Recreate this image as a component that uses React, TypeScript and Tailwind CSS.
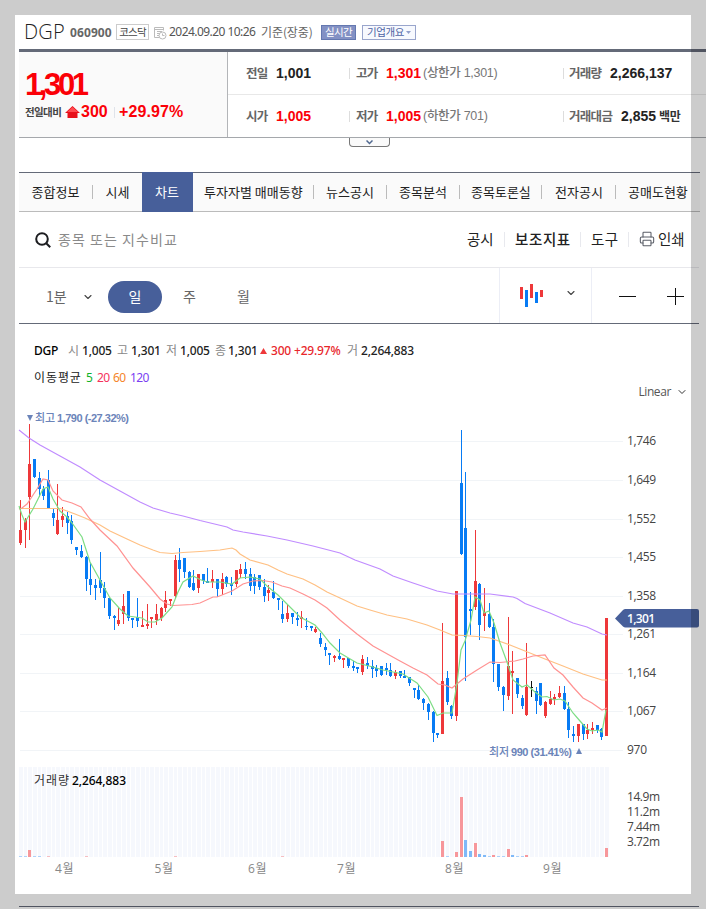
import { ChevronDown, Printer } from 'lucide-react';
import clsx from 'clsx';

type Tone = 'up' | 'down' | 'flat';
type Candle = [tone: Tone, high: number, top: number, bottom: number, low: number];

const u = 'up' as const;
const d = 'down' as const;

// Wick and body edges per trading day, measured down from the top of the plot.
const CANDLES: Candle[] = [
	[u, 100, 130, 143, 145], [u, 118, 120, 130, 148], [u, 24, 64, 97, 140], [d, 59, 59, 77, 78],
	[d, 72, 78, 89, 97], [d, 86, 89, 96, 100], [d, 70, 80, 108, 108], [d, 109, 113, 118, 126],
	[u, 84, 120, 134, 135], [u, 107, 116, 120, 127], [d, 112, 116, 123, 134], [d, 115, 121, 140, 144],
	[d, 147, 147, 150, 155], [d, 145, 151, 157, 158], [d, 156, 157, 179, 191], [d, 163, 179, 185, 195],
	[d, 179, 185, 188, 200], [d, 152, 180, 188, 193], [d, 182, 188, 198, 208], [d, 198, 198, 216, 219],
	[d, 215, 216, 218, 230], [u, 208, 220, 224, 226], [u, 194, 206, 214, 224], [d, 191, 191, 218, 221],
	[d, 218, 218, 220, 228], [d, 198, 217, 221, 227], [u, 211, 225, 227, 227], [u, 204, 224, 226, 229],
	[u, 217, 217, 219, 228], [u, 204, 214, 220, 225], [u, 207, 208, 218, 221], [u, 191, 200, 208, 212],
	[u, 199, 199, 201, 206], [u, 155, 160, 196, 199], [d, 148, 160, 169, 182], [d, 158, 158, 172, 178],
	[d, 171, 172, 187, 188], [d, 170, 183, 190, 191], [u, 174, 174, 188, 193], [d, 174, 174, 181, 184],
	[d, 168, 181, 183, 183], [u, 170, 179, 182, 188], [d, 179, 179, 189, 197], [u, 173, 179, 189, 195],
	[d, 176, 177, 184, 187], [d, 177, 184, 186, 195], [u, 170, 170, 184, 187], [u, 164, 169, 174, 178],
	[d, 162, 169, 174, 179], [d, 168, 174, 186, 191], [d, 174, 177, 186, 194], [d, 175, 175, 187, 190],
	[d, 179, 187, 196, 202], [u, 185, 190, 193, 201], [d, 181, 192, 198, 199], [d, 198, 198, 200, 210],
	[d, 201, 214, 219, 223], [u, 204, 213, 219, 222], [d, 213, 213, 217, 224], [d, 212, 218, 220, 226],
	[u, 211, 217, 219, 228], [d, 218, 226, 227, 230], [d, 226, 226, 228, 231], [u, 227, 229, 232, 233],
	[d, 233, 238, 244, 247], [d, 243, 247, 250, 256], [d, 253, 253, 255, 265], [u, 255, 256, 258, 262],
	[d, 239, 256, 259, 260], [u, 258, 258, 260, 268], [d, 258, 258, 266, 268], [d, 261, 266, 268, 271],
	[d, 267, 267, 269, 273], [u, 255, 259, 272, 275], [d, 257, 263, 266, 269], [d, 260, 266, 269, 278],
	[d, 265, 268, 271, 277], [d, 266, 266, 275, 276], [d, 263, 268, 270, 275], [d, 263, 270, 276, 277],
	[u, 270, 272, 276, 279], [d, 271, 271, 276, 278], [d, 270, 276, 278, 278], [d, 277, 277, 283, 286],
	[d, 288, 288, 290, 298], [d, 285, 290, 299, 300], [d, 298, 299, 303, 310], [d, 303, 304, 312, 320],
	[d, 311, 312, 333, 342], [d, 333, 333, 335, 338], [u, 223, 281, 334, 334], [d, 271, 278, 302, 305],
	[d, 305, 306, 316, 319], [u, 191, 191, 316, 321], [d, 30, 83, 154, 155], [d, 72, 128, 237, 281],
	[d, 192, 209, 211, 235], [u, 130, 181, 207, 210], [d, 183, 184, 225, 240], [u, 188, 212, 216, 231],
	[d, 203, 214, 227, 228], [d, 219, 227, 264, 282], [d, 264, 264, 287, 291], [d, 286, 287, 295, 311],
	[u, 217, 266, 296, 300], [u, 251, 271, 273, 314], [d, 278, 278, 294, 298], [d, 295, 298, 306, 309],
	[u, 243, 287, 315, 316], ['flat', 281, 287, 288, 297], [d, 287, 291, 301, 314], [d, 283, 283, 305, 306],
	[u, 301, 302, 316, 318], [u, 291, 299, 304, 305], [u, 294, 297, 299, 305], [u, 286, 293, 297, 298],
	[d, 286, 293, 309, 310], [d, 302, 309, 330, 338], [d, 326, 334, 336, 342], [u, 324, 324, 336, 342],
	[d, 324, 324, 334, 340], [u, 324, 330, 334, 339], [u, 322, 328, 330, 334], [d, 325, 325, 330, 333],
	[d, 328, 329, 337, 340], [u, 218, 218, 336, 336],
];

const VOLUMES: Record<number, number> = {
	0: 1, 1: 1, 2: 7, 3: 1, 4: 1, 6: 1, 14: 1, 33: 1, 56: 1, 90: 16, 91: 1, 93: 5, 94: 60, 95: 17, 96: 6,
	97: 14, 98: 3, 99: 2, 100: 1, 101: 2, 102: 1, 103: 1, 104: 8, 105: 2, 106: 1, 107: 1, 108: 2, 125: 9,
};

// Days whose volume colour differs from the candle colour.
const VOLUME_TONES: Record<number, Tone> = {
	0: d, 1: d, 6: u, 14: u, 56: u, 94: u, 97: u, 99: d, 101: u, 105: d,
};

const MOVING_AVERAGES = [
	{
		color: '#c08cff',
		points:
			'19,30 29,38 40,45 60,56 80,67 100,80 120,91 140,102 153,108 170,113 183,116 200,120.5 227,127 233,130 243,132 267,136 287,140 313,146 340,153 355,160 380,169 393,176 413,183 437,191 453,194 490,194 513,197 517,198.5 525,203.5 550,213 573,223 587,227 602,234 607,235',
	},
	{
		color: '#ffc083',
		points:
			'19,108.5 60,108.5 67,111 75,114 85,118 100,125 110,131 127,139 140,145 153,150 160,152.5 172,153.5 183,152.5 200,151.5 220,150 232,148 236,150 240,154 250,160 268,165 278,170 287,174 303,179 315,185 327,192 340,198 357,206 370,210 387,215 407,219 427,225 440,230 452,235 463,235.5 477,236.5 490,238 510,245 525,251 545,259 563,266 583,274 602,280 607,280',
	},
	{
		color: '#ff9292',
		points:
			'19,109 22,108 27,104 37,89 43,79 48,80 53,91 62,100 72,103 81,107 90,119 100,130 117,146 133,168 150,187 160,199 167,204 173,205.5 192,204.5 200,203 213,197 217,197 232,191 243,184 253,181 263,180.5 272,182 282,186 290,188 303,194 315,200 327,208 340,220 357,234 373,246 400,261 413,268 427,275 438,284 445,285 452,288 463,279 477,270 490,262 500,262.5 515,261 523,259 533,256 545,255 554,268 563,275 573,287 583,298 592,303 602,310 607,308',
	},
	{
		color: '#7ddd85',
		points:
			'19,106 22,115 25,122 33,109 38,99 43,89 48,87 53,99 60,111 67,117 72,123 82,137 90,162 100,180 110,198 120,209 128,216 142,218 148,222 155,222 162,218 172,207 178,192 183,182 193,176 200,179.5 207,182 220,182 232,184 240,178 250,177 260,179 267,186 278,195 287,204 300,217 315,225 322,233 330,243 340,253 357,263 373,267 383,270 403,274 417,283 428,297 437,315.5 443,313 452,313 457,283 461,250 465,241 471,220 475,197 480,200 484,213 489,211 494,223 500,243 507,262 513,280 522,287 527,285 535,292 542,297 547,296.5 554,300 560,299 565,301 573,313 580,321 587,329 592,331 598,330 602,332 606,310',
	},
];

const PRICE_TICKS = [
	['1,746', 41], ['1,649', 80], ['1,552', 119], ['1,455', 157], ['1,358', 196],
	['1,261', 234], ['1,164', 273], ['1,067', 311], ['970', 350],
] as const;

const VOLUME_TICKS = [['14.9m', 397], ['11.2m', 412], ['7.44m', 427], ['3.72m', 442]] as const;

const MONTHS = [['4월', 55], ['5월', 154.5], ['6월', 248], ['7월', 337], ['8월', 445], ['9월', 543]] as const;

const BODY_FILL: Record<Tone, string> = { up: '#ee383a', down: '#077bf4', flat: '#111111' };
const VOLUME_FILL: Record<Tone, string> = { up: '#f7979b', down: '#7fb9f8', flat: '#999999' };

const dayX = (i: number) => Math.floor(19.42 + i * 4.6885);

const TABS = [
	{ label: '종합정보', className: 'w-[74px] pl-[12.500px]' },
	{ label: '시세', className: 'w-[49px] pl-[12.500px] text-[#2f6094]' },
	{ label: '차트', className: 'w-[51px] pl-[13px] bg-[#475f9a] text-white', active: true },
	{ label: '투자자별 매매동향', className: 'w-[121px] pl-[11px]' },
	{ label: '뉴스공시', className: 'w-[73px] pl-[12px]' },
	{ label: '종목분석', className: 'w-[73px] pl-[12px]' },
	{ label: '종목토론실', className: 'w-[82px] pl-[11px]' },
	{ label: '전자공시', className: 'w-[74px] pl-[13px]' },
	{ label: '공매도현황', className: 'w-[84px] pl-[12px]' },
];

function StockHeader() {
	return (
		<header className="ml-[19px] flex h-[37px] items-center border-b-[3px] border-[#646a78] pl-[5px] leading-none">
			<h1 className="w-[46px] font-['Open_Sans'] text-[20px] font-light tracking-[0.2px] text-[#222]">DGP</h1>
			<b className="mt-[2px] w-[46px] font-['Noto_Sans'] text-[12px] tracking-[0.1px] text-[#666]">060900</b>
			<span className="flex h-4 w-[33px] items-center justify-center border border-[#ccc] text-[10.500px] tracking-[-0.8px] text-[#444]">
				코스닥
			</span>
			<svg className="ml-[5px] mt-[3px] size-[13px]" viewBox="0 0 13 13" fill="none" stroke="#bbb">
				<path d="M5 10.5H.5V.5h9v3M.5 2.5h9M3 4.5h5M3 6.5h3M3 8.500h2" />
				<circle cx="8.500" cy="8.500" r="3.500" fill="#fff" />
				<path d="M8.500 6.500v2h2" />
			</svg>
			<time className="ml-[2px] w-[92px] font-['Noto_Sans'] text-[12px] tracking-[-0.55px] text-[#555]">
				2024.09.20 10:26
			</time>
			<span className="w-[60px] text-[12px] tracking-[-0.1px] text-[#666]">기준(장중)</span>
			<span className="flex h-[15px] w-[35px] items-center justify-center border border-[#6478b0] bg-[#8391c4] text-[10.500px] tracking-[-0.6px] text-white">
				실시간
			</span>
			<span className="ml-[6px] flex h-[15px] w-[54px] items-center gap-[2px] border border-[#99a5cc] bg-[#f7f9fe] pl-[4px] text-[10.500px] tracking-[-0.4px] text-[#4e64a4]">
				기업개요
				<svg className="h-[3px] w-[5px]" viewBox="0 0 5 3">
					<path d="M0 0h5L2.500 3z" fill="#8f9ecb" />
				</svg>
			</span>
		</header>
	);
}

function QuoteCell({ label, value, note, red, className, labelClass }: {
	label: string;
	value: string;
	note?: string;
	red?: boolean;
	className: string;
	labelClass: string;
}) {
	return (
		<div className={clsx('flex items-center', className)}>
			<span className={clsx('text-[12.500px] font-bold tracking-[-0.7px] text-[#666]', labelClass)}>{label}</span>
			<b className={clsx("font-['Liberation_Sans'] text-[14px]", red ? 'text-[#fb0007]' : 'text-[#222]')}>{value}</b>
			{note && (
				<span className="ml-[2px] font-['Liberation_Sans','Noto_Sans_CJK_KR',sans-serif] text-[12.500px] font-medium tracking-[-0.3px] text-[#777]">
					{note}
				</span>
			)}
		</div>
	);
}

function QuoteSummary() {
	return (
		<section className="ml-[19px] flex h-[86px] border-b border-[#a5a8ac] leading-none">
			<div className="flex w-[209px] flex-col border-r border-[#b3b5b8] bg-[#fafafa] pl-[6px] pt-[17px] text-[#fb0007]">
				<strong className="h-[32px] font-['Liberation_Sans'] text-[31px] leading-[32px] tracking-[-3.4px]">1,301</strong>
				<div className="mt-[2px] flex h-[18px] items-center">
					<span className="w-[40px] text-[10.500px] font-bold tracking-[-0.6px] text-[#444]">전일대비</span>
					<svg className="h-[12px] w-[15px]" viewBox="0 0 15 12">
						<path d="M7.500 0L15 7h-2.500v5h-10V7H0z" fill="#e8101a" />
						<path d="M7.500 1L13 6H2z" fill="#ff4a50" />
					</svg>
					<b className="ml-[1px] w-[33px] font-['Liberation_Sans'] text-[16px]">300</b>
					<i className="mr-[4px] h-[11px] w-px bg-[#dfe3ea]" />
					<b className="font-['Liberation_Sans'] text-[16px] tracking-[0.1px]">+29.97%</b>
				</div>
			</div>
			<div className="flex flex-1 flex-col">
				<div className="flex h-[43px] items-center border-b border-[#e8e8e8] pl-[18px]">
					<QuoteCell className="w-[103px]" labelClass="w-[30px]" label="전일" value="1,001" />
					<i className="h-[11px] w-px bg-[#ddd]" />
					<QuoteCell className="w-[213px] pl-[6px]" labelClass="w-[30px]" label="고가" value="1,301" note="(상한가 1,301)" red />
					<i className="h-[11px] w-px bg-[#ddd]" />
					<QuoteCell className="pl-[5px]" labelClass="w-[41px]" label="거래량" value="2,266,137" />
				</div>
				<div className="flex h-[42px] items-center pl-[18px]">
					<QuoteCell className="w-[103px]" labelClass="w-[30px]" label="시가" value="1,005" red />
					<i className="h-[11px] w-px bg-[#ddd]" />
					<QuoteCell className="w-[213px] pl-[6px]" labelClass="w-[30px]" label="저가" value="1,005" note="(하한가 701)" red />
					<i className="h-[11px] w-px bg-[#ddd]" />
					<QuoteCell className="pl-[5px]" labelClass="w-[52px]" label="거래대금" value="2,855" />
					<b className="ml-[3px] text-[12px] tracking-[-0.3px] text-[#333]">백만</b>
				</div>
			</div>
		</section>
	);
}

function NavTabs() {
	return (
		<nav className="ml-[19px] flex h-[40px] w-[681px] border-y border-t-[#646a78] border-b-[#bbb] bg-[#fafafa]">
			{TABS.map((tab, i) => (
				<div
					key={tab.label}
					className={clsx(
						'flex shrink-0 items-center whitespace-nowrap text-[13px]',
						tab.active ? '-my-px' : 'text-[#222]',
						tab.className
					)}
				>
					<span className="flex-1">{tab.label}</span>
					{![1, 2, 8].includes(i) && <i className="h-[14px] w-px bg-[#bbb]" />}
				</div>
			))}
		</nav>
	);
}

function SearchBar() {
	return (
		<div className="ml-[19px] flex h-[56px] w-[680px] items-center border-b border-[#e8e8ec] pl-[16px] text-[14.500px] leading-[22px] text-[#222]">
			<svg className="size-4" viewBox="0 0 16 16" fill="none" stroke="#1c1d20" strokeWidth="2">
				<circle cx="7" cy="7" r="5.800" />
				<path d="M11.200 11.200L15.200 15.200" />
			</svg>
			<span className="mb-[2px] ml-[7px] w-[409px] text-[14px] tracking-[1.05px] text-[#8a8a8a]">종목 또는 지수비교</span>
			<span className="mb-[2px] w-[37px]">공시</span>
			<i className="h-[15px] w-px bg-[#e8e9ee]" />
			<span className="mb-[2px] ml-[10px] w-[65px] font-medium tracking-[0.6px]">보조지표</span>
			<i className="h-[15px] w-px bg-[#e8e9ee]" />
			<span className="mb-[2px] ml-[10px] w-[37px] tracking-[0.3px]">도구</span>
			<i className="h-[15px] w-px bg-[#e8e9ee]" />
			<Printer className="mb-[2px] ml-[10px] size-4 text-[#5b5f68]" strokeWidth={1.6} />
			<span className="mb-[2px] ml-[3px]">인쇄</span>
		</div>
	);
}

function PeriodBar() {
	return (
		<div className="ml-[19px] flex h-[56px] w-[680px] items-center border-b border-[#646a78] text-[14px] text-[#666]">
			<div className="flex items-center pt-[2px]">
				<span className="ml-[27px] w-[36px]">1분</span>
				<ChevronDown className="size-3 text-[#444]" strokeWidth={2.200} />
				<span className="ml-[14px] flex h-8 w-[54px] items-center justify-center rounded-full bg-[#475f9a] text-white">일</span>
				<span className="ml-[21px] w-[54px]">주</span>
				<span>월</span>
			</div>
			<div className="ml-auto flex h-full w-[93px] items-center border-x border-[#eceef6] pl-[20px]">
				<svg className="mb-[2px] h-6 w-6" viewBox="0 0 24 24">
					<path d="M0 4h3v12H0zM10 1h3v14h-3zM20 7h3v7h-3z" fill="#ee383a" />
					<path d="M5 7h3v17H5zM15 9h3v11h-3z" fill="#077bf4" />
				</svg>
				<ChevronDown className="mb-[5px] ml-[21px] size-3 text-[#444]" strokeWidth={2.200} />
			</div>
			<svg className="h-[18px] w-[107px]" viewBox="0 0 107 18" stroke="#111">
				<path d="M27 9.500H44M75 9.500H92M83.500 1V18" />
			</svg>
		</div>
	);
}

function Legend() {
	return (
		<div className="ml-[34px] flex flex-col whitespace-nowrap pt-[17px] font-['Noto_Sans','Noto_Sans_CJK_KR',sans-serif] text-[12px] leading-[20px] text-[#222]">
			<div className="flex h-[20px] font-medium tracking-[-0.2px]">
				<span className="w-[34px] text-black">DGP</span>
				<span className="w-[14px] font-normal text-[#888]">시</span>
				<span className="w-[35px]">1,005</span>
				<span className="w-[14px] font-normal text-[#888]">고</span>
				<span className="w-[35px]">1,301</span>
				<span className="w-[14px] font-normal text-[#888]">저</span>
				<span className="w-[35px]">1,005</span>
				<span className="w-[13px] font-normal text-[#888]">종</span>
				<span className="w-[32px]">1,301</span>
				<svg className="mt-[7px] h-[6px] w-[7px]" viewBox="0 0 7 6">
					<path d="M3.500 0L7 6H0z" fill="#ee383a" />
				</svg>
				<span className="ml-[4px] w-[23px] text-[#e8262b]">300</span>
				<span className="w-[53px] text-[#e8262b]">+29.97%</span>
				<span className="w-[14px] font-normal text-[#888]">거</span>
				<span>2,264,883</span>
			</div>
			<div className="mt-[7px] flex h-[20px]">
				<span className="w-[52px] tracking-[0.9px]">이동평균</span>
				<span className="w-[11px] text-[#0fb32a]">5</span>
				<span className="w-[16px] tracking-[-0.5px] text-[#f5325c]">20</span>
				<span className="w-[17px] tracking-[-0.5px] text-[#f5852a]">60</span>
				<span className="tracking-[-0.6px] text-[#7b3ff2]">120</span>
			</div>
		</div>
	);
}

function Chart() {
	return (
		<svg
			className="h-[480px] w-[706px] font-['Open_Sans','Noto_Sans_CJK_KR',sans-serif]"
			viewBox="0 0 706 480"
			fontSize="12"
		>
			<g shapeRendering="crispEdges">
				{PRICE_TICKS.map(([label, y]) => (
					<rect key={label} x="20" y={y} width="603" height="1" fill="#f1f4f7" />
				))}
				{CANDLES.map((_, i) => (
					<rect key={i} x={dayX(i)} y="367" width={dayX(i + 1) - dayX(i) - 1} height="90" fill="#f6f8fd" />
				))}
				{CANDLES.map(([tone, high, top, bottom, low], i) => (
					<g key={i} fill={BODY_FILL[tone]}>
						<rect x={dayX(i) + 1} y={high} width="1" height={Math.max(low - high, 1)} />
						<rect x={dayX(i)} y={top} width="3" height={bottom - top} />
					</g>
				))}
				{Object.entries(VOLUMES).map(([key, height]) => {
					const i = Number(key);
					return (
						<rect
							key={key}
							x={dayX(i)}
							y={457 - height}
							width="3"
							height={height}
							fill={VOLUME_FILL[VOLUME_TONES[i] ?? CANDLES[i][0]]}
							opacity={height === 1 ? 0.6 : 1}
						/>
					);
				})}
			</g>
			{MOVING_AVERAGES.map((line) => (
				<polyline key={line.color} points={line.points} fill="none" stroke={line.color} strokeWidth="1.200" />
			))}
			<g fill="#444">
				{PRICE_TICKS.map(([label, y]) => (
					<text key={label} x="627" y={y + 4} textLength={label === '970' ? 20 : 29}>{label}</text>
				))}
				{VOLUME_TICKS.map(([label, y]) => (
					<text key={label} x="627" y={y + 4} textLength="33">{label}</text>
				))}
			</g>
			<path d="M615 218.500L623 210Q624 209 625.500 209H697Q699 209 699 211V225.500Q699 227.500 697 227.500H625.500Q624 227.500 623 226.500Z" fill="#475f9a" />
			<text x="627" y="223" textLength="28" fill="#fff" fontWeight="600">1,301</text>
			<g fill="#6b84b9" fontSize="11">
				<path d="M27 15h6l-3 6z" />
				<text x="35" y="22" textLength="20" fontWeight="500">최고</text>
				<text className="font-['Liberation_Sans']" x="57" y="22" textLength="72" fontWeight="700">1,790 (-27.32%)</text>
				<text x="489" y="356" textLength="20" fontWeight="500">최저</text>
				<text className="font-['Liberation_Sans']" x="511" y="356" textLength="61" fontWeight="700">990 (31.41%)</text>
				<path d="M576 354h6l-3-6z" />
			</g>
			<text x="34" y="385" textLength="35" fill="#333">거래량</text>
			<text className="font-['Noto_Sans']" x="72" y="385" textLength="54" fill="#000" fontWeight="500">2,264,883</text>
			<g fill="#888">
				{MONTHS.map(([label, x]) => (
					<text key={label} x={x} y="473" textLength="18.500">{label}</text>
				))}
			</g>
		</svg>
	);
}

export default function App() {
	return (
		<div className="relative h-[909px] w-[706px] overflow-hidden bg-white pt-[15px] font-['Noto_Sans_CJK_KR',sans-serif]">
			<StockHeader />
			<QuoteSummary />
			<div className="ml-[349px] flex h-[9px] w-[41px] items-center justify-center rounded-b-sm border border-t-0 border-[#777] bg-[#fafafa]">
				<svg className="h-[5px] w-[7px]" viewBox="0 0 7 5" fill="none" stroke="#50688f" strokeWidth="1.500">
					<path d="M.5 .5L3.500 3.500L6.500 .5" />
				</svg>
			</div>
			<div className="mt-[25px]">
				<NavTabs />
				<SearchBar />
				<PeriodBar />
			</div>
			<div className="flex h-[76px] justify-between">
				<Legend />
				<button className="mr-[18px] mt-[58px] flex h-[20px] items-center gap-[5px] font-['Open_Sans'] text-[12px] tracking-[-0.4px] text-[#555]">
					Linear
					<ChevronDown className="size-3 text-[#333]" strokeWidth={2} />
				</button>
			</div>
			<Chart />
			<div className="ml-[19px] mt-[26px] h-px w-[680px] bg-[#646a78]" />
			{/* Dimmed frame around the captured page area */}
			<div className="pointer-events-none absolute inset-0 border-[15px] border-black/20" />
		</div>
	);
}
